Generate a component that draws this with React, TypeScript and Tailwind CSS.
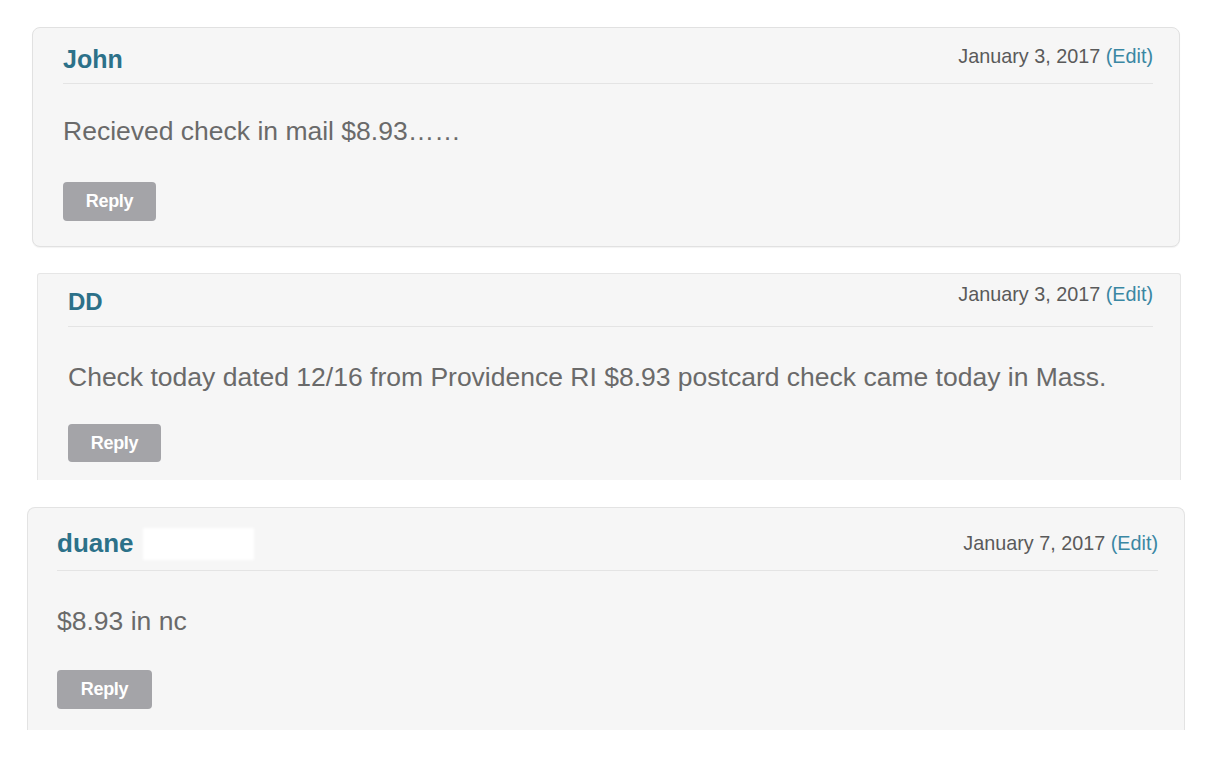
import React from 'react';

type Comment = {
  id: string;
  author: string;
  date: string;
  body: string;
  redacted?: boolean;
  card: string;
  header: string;
  nameSize: string;
  dateOffset: string;
  bodyGap: string;
  reply: string;
};

const comments: Comment[] = [
  {
    id: 'c1',
    author: 'John',
    date: 'January 3, 2017',
    body: 'Recieved check in mail $8.93……',
    card: 'ml-[32px] mt-[27px] w-[1148px] rounded-[8px] border border-[#e1e1e1] pl-[30px] pr-[26px] pt-[16px] pb-[25px] shadow-[0_1px_1px_rgba(0,0,0,0.05)]',
    header: 'pb-[9px]',
    nameSize: 'text-[25px]',
    dateOffset: 'mt-0',
    bodyGap: 'mt-[31px]',
    reply: 'mt-[35px] h-[39px] w-[93px]',
  },
  {
    id: 'c2',
    author: 'DD',
    date: 'January 3, 2017',
    body: 'Check today dated 12/16 from Providence RI $8.93 postcard check came today in Mass.',
    card: 'ml-[37px] mt-[26px] h-[207px] w-[1144px] overflow-hidden rounded-t-[3px] border-x border-t border-[#e6e6e6] pl-[30px] pr-[27px] pt-[13px]',
    header: 'pb-[9px]',
    nameSize: 'text-[24px]',
    dateOffset: '-mt-[5px]',
    bodyGap: 'mt-[34px]',
    reply: 'mt-[31px] h-[38px] w-[93px]',
  },
  {
    id: 'c3',
    author: 'duane',
    date: 'January 7, 2017',
    body: '$8.93 in nc',
    redacted: true,
    card: 'ml-[27px] mt-[27px] h-[223px] w-[1158px] overflow-hidden rounded-t-[8px] border-x border-t border-[#e3e3e3] pl-[29px] pr-[26px] pt-[20px]',
    header: 'pb-[10px]',
    nameSize: 'text-[26px]',
    dateOffset: 'mt-[3px]',
    bodyGap: 'mt-[34px]',
    reply: 'mt-[33px] h-[39px] w-[95px]',
  },
];

const CommentCard = ({ c }: { c: Comment }) => (
  <div className={`bg-[#f6f6f6] ${c.card}`}>
    <div className={`flex items-start justify-between border-b border-[#e4e4e4] ${c.header}`}>
      <div className="flex items-start">
        <span className={`font-bold leading-[30px] text-[#2c7189] ${c.nameSize}`}>{c.author}</span>
        {c.redacted && <span className="ml-[9px] h-[32px] w-[111px] bg-white blur-[1.5px]" />}
      </div>
      <span className={`text-[19.8px] leading-[24px] text-[#5a5a5a] ${c.dateOffset}`}>
        {c.date} <span className="text-[#3a87a3]">(Edit)</span>
      </span>
    </div>
    <p className={`text-[26.5px] leading-[32px] text-[#6a6a6a] ${c.bodyGap}`}>{c.body}</p>
    <button
      className={`flex items-center justify-center rounded-[4px] bg-[#a4a4a8] text-[18px] font-bold tracking-[-0.3px] text-white ${c.reply}`}
    >
      Reply
    </button>
  </div>
);

export default function App() {
  return (
    <div
      className="flex h-[762px] w-[1220px] flex-col overflow-hidden bg-white"
      style={{ fontFamily: '"Liberation Sans", Arial, sans-serif' }}
    >
      {comments.map((c) => (
        <CommentCard key={c.id} c={c} />
      ))}
    </div>
  );
}
